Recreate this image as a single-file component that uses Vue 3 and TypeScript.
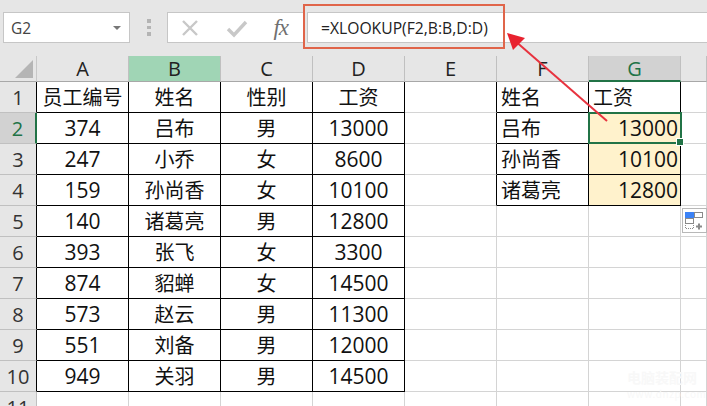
<script setup lang="ts">
const cols = ['A', 'B', 'C', 'D', 'E', 'F', 'G', '']
const left: string[][] = [
  ['员工编号', '姓名', '性别', '工资'],
  ['374', '吕布', '男', '13000'],
  ['247', '小乔', '女', '8600'],
  ['159', '孙尚香', '女', '10100'],
  ['140', '诸葛亮', '男', '12800'],
  ['393', '张飞', '女', '3300'],
  ['874', '貂蝉', '女', '14500'],
  ['573', '赵云', '男', '11300'],
  ['551', '刘备', '男', '12000'],
  ['949', '关羽', '男', '14500'],
]
const right: string[][] = [
  ['姓名', '工资'],
  ['吕布', '13000'],
  ['孙尚香', '10100'],
  ['诸葛亮', '12800'],
]
const rowNums = Array.from({ length: 11 }, (_, i) => i + 1)

function text(r: number, c: number): string {
  if (c < 4) return left[r]?.[c] ?? ''
  if (c === 5 || c === 6) return right[r]?.[c - 5] ?? ''
  return ''
}
function cellClass(r: number, c: number) {
  const inLeft = r < 10 && c < 4
  const inRight = r < 4 && (c === 5 || c === 6)
  return {
    'b-all': inLeft || inRight,
    'b-r': r < 4 && c === 4,
    num: /^\d+$/.test(text(r, c)),
    'al-left': c === 5 || (c === 6 && r === 0),
    'al-right': c === 6 && r > 0,
    fill: c === 6 && r > 0 && r < 4,
  }
}
</script>

<template>
  <div class="sheet">
    <div class="bar">
      <div class="namebox"><span>G2</span><i class="caret"></i></div>
      <div class="dots"><i></i><i></i><i></i></div>
      <div class="fxbox">
        <svg class="ic" width="22" height="22" viewBox="0 0 22 22">
          <path d="M4 4 L18 18 M18 4 L4 18" stroke="#c8c8c8" stroke-width="2.4" fill="none" />
        </svg>
        <svg class="ic" width="22" height="22" viewBox="0 0 22 22">
          <path d="M2 12 L8 18 L20 5" stroke="#c8c8c8" stroke-width="3.4" fill="none" />
        </svg>
        <span class="fx">fx</span>
      </div>
      <div class="formula">=XLOOKUP(F2,B:B,D:D)</div>
    </div>

    <div class="grid">
      <div class="corner"><i></i></div>
      <div
        v-for="(c, i) in cols"
        :key="c + i"
        class="colh"
        :class="{ green: c === 'B', sel: c === 'G' }"
      >{{ c }}</div>
      <template v-for="(n, r) in rowNums" :key="n">
        <div class="rowh" :class="{ rsel: n === 2, dark: n <= 10 && n !== 2 }">{{ n }}</div>
        <div
          v-for="c in 8"
          :key="c"
          class="cell"
          :class="cellClass(r, c - 1)"
        >
          {{ text(r, c - 1) }}
          <template v-if="r === 1 && c === 7">
            <span class="selection"></span>
            <span class="handle"></span>
          </template>
        </div>
      </template>
    </div>

    <div class="tag">
      <svg width="20" height="18" viewBox="0 0 20 18">
        <rect x="0.5" y="0.5" width="8" height="5" fill="#3b82f6" stroke="#3b82f6" />
        <rect x="9.5" y="0.5" width="8" height="5" fill="#fff" stroke="#8a8a8a" />
        <rect x="0.5" y="6.5" width="8" height="5" fill="#fff" stroke="#8a8a8a" />
        <path d="M0.5 13v3.5h8V13" fill="none" stroke="#8a8a8a" stroke-dasharray="1 1" />
        <path d="M14 11.5v6M11 14.5h6" stroke="#8a8a8a" stroke-width="2" />
      </svg>
    </div>

    <div class="redbox"></div>
    <svg class="arrow" width="707" height="406" viewBox="0 0 707 406">
      <path d="M607 121 L514 40" stroke="#e8333f" stroke-width="2" fill="none" />
      <polygon points="507,33 525,38 513,50" fill="#e8222f" />
    </svg>

    <div class="mark"><div>电脑装配网</div><div class="mark2">www.dnzp.com</div></div>
  </div>
</template>

<style>
html, body { margin: 0; padding: 0; background: #fff; }
</style>

<style scoped>
.sheet {
  position: relative;
  width: 707px;
  height: 406px;
  overflow: hidden;
  font-family: "Noto Sans CJK SC", "Noto Sans", sans-serif;
  color: #111;
  background: #fff;
}
.bar {
  height: 56px;
  background: #e6e6e6;
  box-sizing: border-box;
  padding: 12px 0 13px 3px;
  display: flex;
  align-items: stretch;
}
.namebox {
  width: 127px;
  box-sizing: border-box;
  background: #fff;
  border: 1px solid #c6c6c6;
  display: flex;
  align-items: center;
  justify-content: space-between;
  padding: 0 8px 0 7px;
  font-size: 15.5px;
  color: #444;
  font-family: "Open Sans", sans-serif;
}
.caret {
  width: 0;
  height: 0;
  border-left: 4px solid transparent;
  border-right: 4px solid transparent;
  border-top: 4px solid #777;
}
.dots {
  width: 37px;
  display: flex;
  flex-direction: column;
  align-items: center;
  justify-content: center;
  gap: 3px;
}
.dots i {
  width: 4px;
  height: 3.5px;
  background: #b4b4b4;
}
.fxbox {
  width: 137px;
  box-sizing: border-box;
  background: #fff;
  border: 1px solid #c6c6c6;
  border-right: 0;
  display: flex;
  align-items: center;
  padding: 0 16px 0 11px;
  justify-content: space-between;
}
.fx {
  font-family: "Liberation Serif", serif;
  font-style: italic;
  font-size: 23px;
  line-height: 1;
  color: #707070;
  letter-spacing: -1px;
}
.formula {
  flex: 1;
  margin-left: 3px;
  box-sizing: border-box;
  background: #fff;
  border: 1px solid #c6c6c6;
  border-right: 0;
  padding-left: 13px;
  display: flex;
  align-items: center;
  font-size: 15.7px;
  font-family: "Open Sans", sans-serif;
  color: #222;
}
.grid {
  display: grid;
  grid-template-columns: 37px repeat(7, 92px) 26px;
  grid-template-rows: 26px repeat(11, 31px);
}
.corner {
  background: #e6e6e6;
  border-right: 1px solid #c8c8c8;
  border-bottom: 1px solid #a8a8a8;
  box-sizing: border-box;
  display: flex;
  justify-content: flex-end;
  align-items: flex-end;
  padding: 0 3px 3px 0;
}
.corner i {
  width: 0;
  height: 0;
  border-left: 18px solid transparent;
  border-bottom: 18px solid #b5b5b5;
}
.colh {
  background: #e6e6e6;
  box-sizing: border-box;
  border-right: 1px solid #c0c0c0;
  border-bottom: 1px solid #a8a8a8;
  display: flex;
  align-items: center;
  justify-content: center;
  font-size: 20px;
  font-family: "Open Sans", sans-serif;
  color: #222;
}
.colh.green { background: #a0d5b5; }
.colh.sel {
  background: #d2d2d2;
  color: #217346;
  border-bottom: 2px solid #217346;
}
.rowh {
  background: #e6e6e6;
  box-sizing: border-box;
  border-right: 1px solid #c0c0c0;
  border-bottom: 1px solid #c0c0c0;
  display: flex;
  align-items: center;
  justify-content: center;
  font-size: 20px;
  font-family: "Open Sans", sans-serif;
  color: #333;
}
.rowh.dark { border-right-color: #000; }
.rowh.rsel {
  background: #d2d2d2;
  color: #217346;
  border-right: 2px solid #217346;
}
.cell {
  position: relative;
  box-sizing: border-box;
  border-right: 1px solid #d4d4d4;
  border-bottom: 1px solid #d4d4d4;
  display: flex;
  align-items: center;
  justify-content: center;
  font-size: 20px;
  line-height: 1;
  white-space: nowrap;
}
.cell.num {
  font-family: "Open Sans", sans-serif;
  font-size: 21px;
  padding-top: 1px;
}
.cell.b-all {
  border-right-color: #000;
  border-bottom-color: #000;
}
.cell.b-r { border-right-color: #000; }
.cell.al-left { justify-content: flex-start; padding-left: 4px; }
.cell.al-right { justify-content: flex-end; padding-right: 2px; }
.cell.fill { background: #fff2cc; }
.selection {
  position: absolute;
  left: -1px;
  top: -1px;
  right: -2px;
  bottom: -1px;
  border: 2px solid #217346;
  pointer-events: none;
}
.handle {
  position: absolute;
  right: -4px;
  bottom: -3px;
  width: 6px;
  height: 6px;
  background: #217346;
  border: 1px solid #fff;
  z-index: 2;
}
.tag {
  position: absolute;
  left: 682px;
  top: 208px;
  width: 25px;
  height: 25px;
  box-sizing: border-box;
  border: 1px solid #b8b8b8;
  background: #fff;
  display: flex;
  align-items: center;
  justify-content: center;
}
.redbox {
  position: absolute;
  left: 303px;
  top: 4px;
  width: 202px;
  height: 45px;
  box-sizing: border-box;
  border: 2px solid #e0654a;
}
.arrow {
  position: absolute;
  left: 0;
  top: 0;
  pointer-events: none;
}
.mark {
  position: absolute;
  left: 627px;
  top: 367px;
  color: #f8f8f8;
  font-size: 14px;
  font-weight: bold;
  line-height: 20px;
  white-space: nowrap;
}
.mark2 {
  font-size: 10px;
  line-height: 14px;
  letter-spacing: 0.6px;
  font-weight: normal;
}
</style>
